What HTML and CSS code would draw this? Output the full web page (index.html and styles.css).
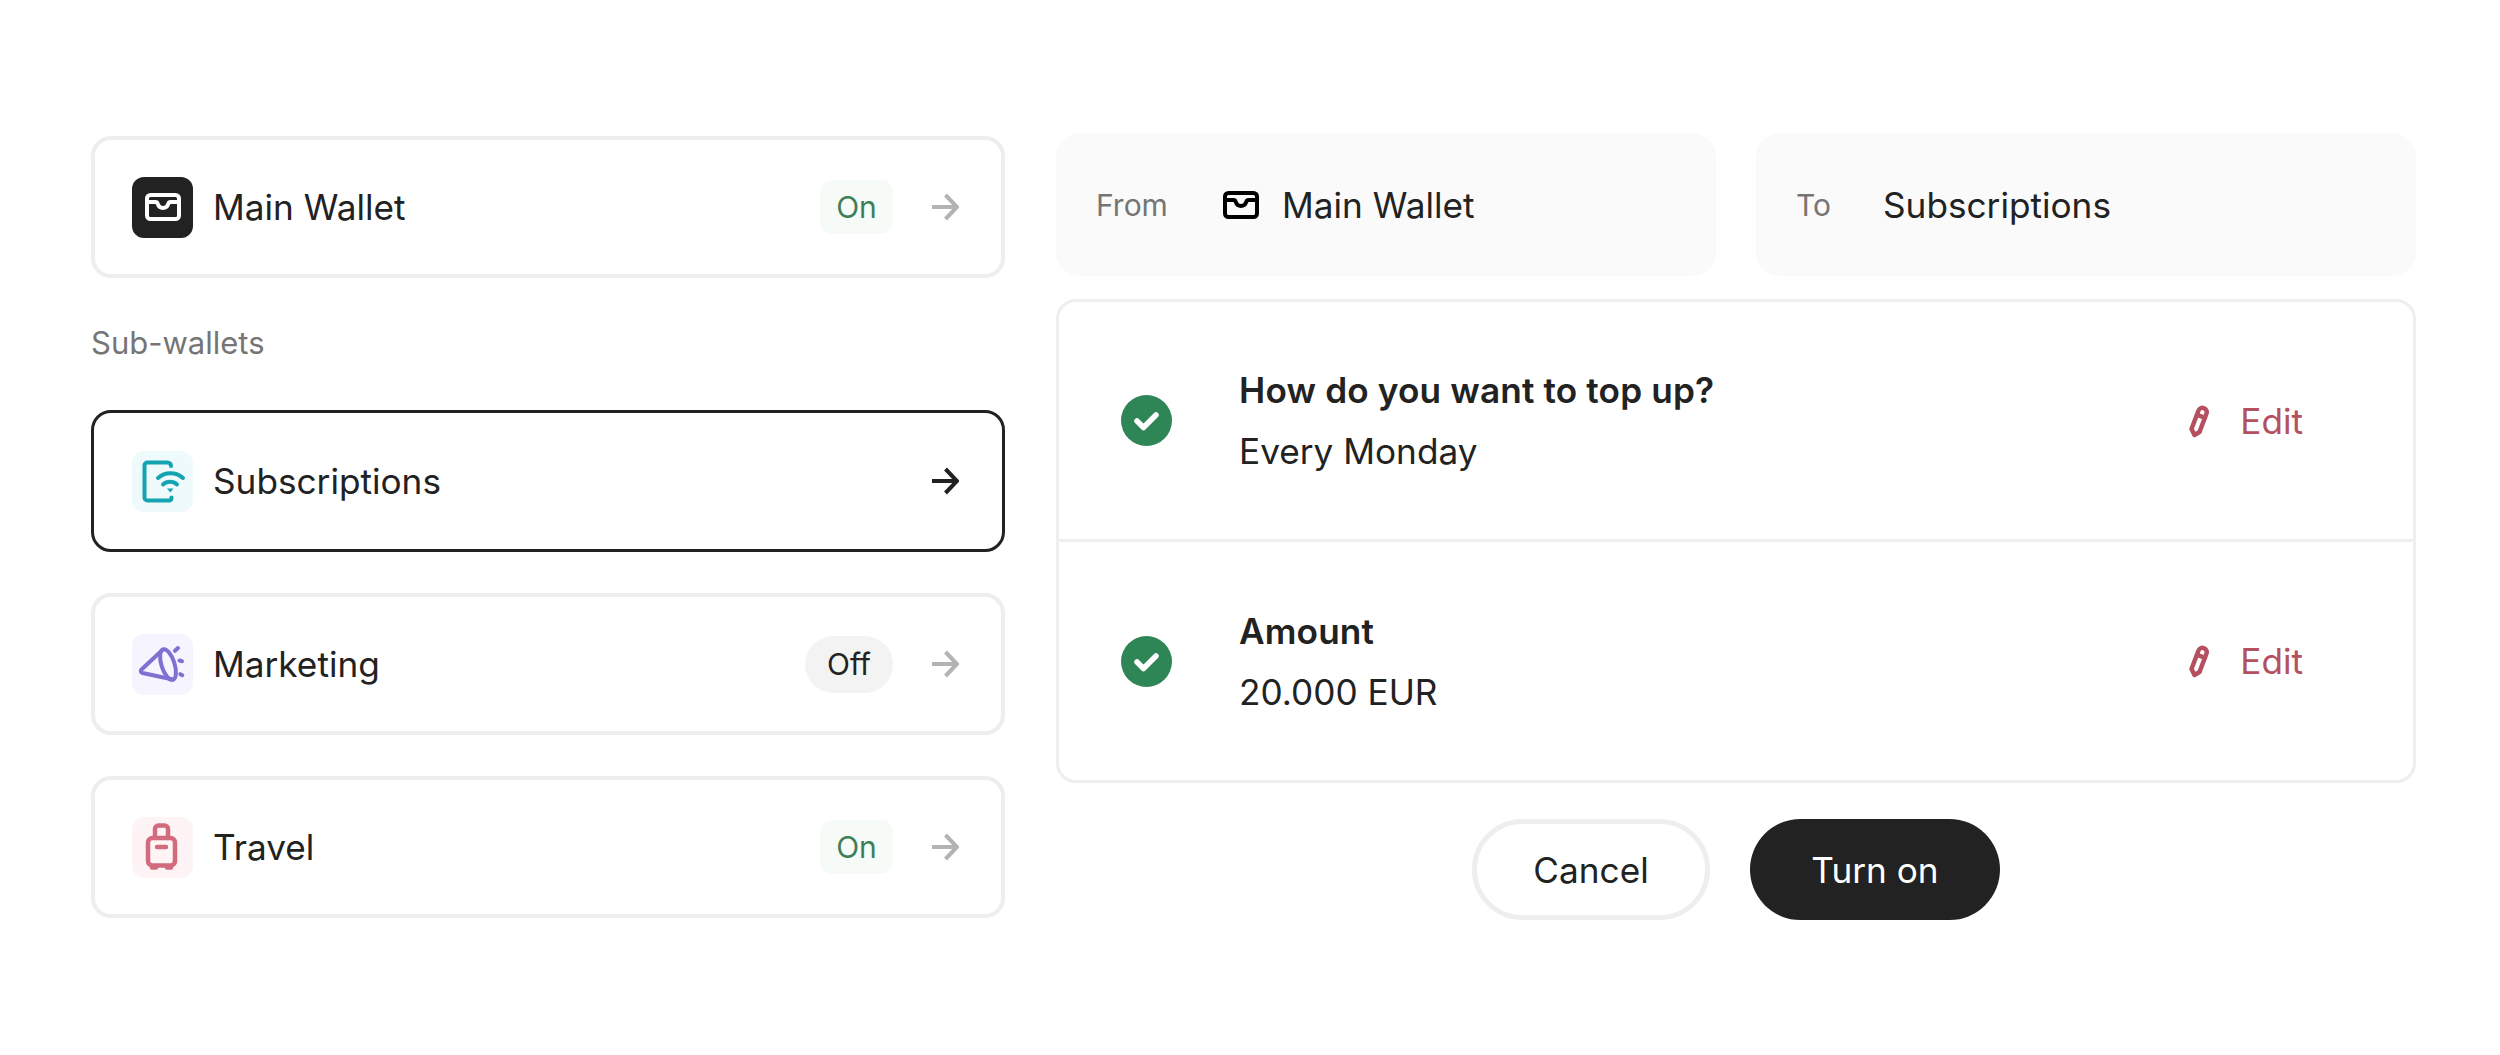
FILE: index.html
```html
<!DOCTYPE html>
<html lang="en">
<head>
<meta charset="utf-8">
<title>Wallets</title>
<link rel="stylesheet" href="styles.css">
</head>
<body>
<main class="page">
  <section class="wallets">
    <div class="card">
      <span class="tile tile-dark">
        <svg class="wallet-icon" viewBox="0 0 36 28"><rect x="2" y="2" width="32" height="24" rx="3.5"/><path d="M2 9h8.500c1.500 0 2 1 2.300 2 .7 2.500 2.700 4 5.200 4s4.500-1.500 5.200-4c.3-1 .8-2 2.300-2H34"/></svg>
      </span>
      <span class="name">Main Wallet</span>
      <span class="badge badge-on">On</span>
      <svg class="arrow" viewBox="0 0 28 28"><path d="M1 14h25M14.500 2 26 14 14.500 26"/></svg>
    </div>
    <h2 class="section-label">Sub-wallets</h2>
    <div class="card card-active">
      <span class="tile tile-teal">
        <svg class="tile-icon" viewBox="0 0 61 61"><path class="teal" d="M39 15c0-2-1.500-3.500-3.500-3.500h-20c-1.700 0-3 1.300-3 3V46.500c0 1.700 1.300 3 3 3H37c1.500 0 2.500-1 2.500-3"/><path class="teal" d="M26 27c7-6.500 18-6.500 25 0M31 33.500c4-3.700 10-3.700 14 0"/><path class="teal-fill" d="M35 37.500h6.500l-3.250 4z"/></svg>
      </span>
      <span class="name">Subscriptions</span>
      <svg class="arrow arrow-dark" viewBox="0 0 28 28"><path d="M1 14h25M14.500 2 26 14 14.500 26"/></svg>
    </div>
    <div class="card">
      <span class="tile tile-violet">
        <svg class="tile-icon" viewBox="0 0 61 61"><path class="violet" d="M31 15.500 9.500 35.500c-1.300 1.300-.8 3 1 3.500L41 45.500"/><ellipse class="violet" cx="36" cy="30.500" rx="6.500" ry="16" transform="rotate(-18 36 30.500)"/><path class="violet" d="M46 14l-3 2.800M47.500 26.500l2.500.7M48.300 40.200l2 1"/></svg>
      </span>
      <span class="name">Marketing</span>
      <span class="badge badge-off">Off</span>
      <svg class="arrow" viewBox="0 0 28 28"><path d="M1 14h25M14.500 2 26 14 14.500 26"/></svg>
    </div>
    <div class="card">
      <span class="tile tile-rose">
        <svg class="tile-icon tile-icon-bold" viewBox="0 0 61 61"><rect class="rose" x="16" y="21" width="27" height="27.500" rx="4.500"/><path class="rose" d="M23 21v-9c0-2 1.500-3.500 3.500-3.500h6c2 0 3.500 1.500 3.500 3.500v9M25 30h9M20 50.500h4M35 50.500h4"/></svg>
      </span>
      <span class="name">Travel</span>
      <span class="badge badge-on">On</span>
      <svg class="arrow" viewBox="0 0 28 28"><path d="M1 14h25M14.500 2 26 14 14.500 26"/></svg>
    </div>
  </section>

  <section class="details">
    <div class="route">
      <div class="route-box">
        <span class="route-label">From</span>
        <svg class="wallet-icon wallet-icon-dark" viewBox="0 0 36 28"><rect x="2" y="2" width="32" height="24" rx="3.5"/><path d="M2 9h8.500c1.500 0 2 1 2.300 2 .7 2.500 2.700 4 5.200 4s4.500-1.500 5.200-4c.3-1 .8-2 2.300-2H34"/></svg>
        <span class="name">Main Wallet</span>
      </div>
      <div class="route-box">
        <span class="route-label route-label-to">To</span>
        <span class="name">Subscriptions</span>
      </div>
    </div>
    <div class="steps">
      <div class="step">
        <svg class="check" viewBox="0 0 51 51"><circle cx="25.500" cy="25.500" r="25.500"/><path d="M16 26l6.500 6.500L35 20"/></svg>
        <div class="step-text">
          <strong class="step-title">How do you want to top up?</strong>
          <span class="step-value">Every Monday</span>
        </div>
        <span class="edit">
          <svg class="pencil" viewBox="0 0 23 34"><path d="M2.500 25 9.500 6.500c.9-2.200 3-3.200 5.200-2.400 2.400.9 3.600 3.100 2.800 5.300L10.500 28l-5 3z"/><path d="M8.500 11l7.500 2.800"/></svg>
          Edit
        </span>
      </div>
      <div class="step">
        <svg class="check" viewBox="0 0 51 51"><circle cx="25.500" cy="25.500" r="25.500"/><path d="M16 26l6.500 6.500L35 20"/></svg>
        <div class="step-text">
          <strong class="step-title">Amount</strong>
          <span class="step-value">20.000 EUR</span>
        </div>
        <span class="edit">
          <svg class="pencil" viewBox="0 0 23 34"><path d="M2.500 25 9.500 6.500c.9-2.200 3-3.200 5.200-2.400 2.400.9 3.600 3.100 2.800 5.300L10.500 28l-5 3z"/><path d="M8.500 11l7.500 2.800"/></svg>
          Edit
        </span>
      </div>
    </div>
    <div class="actions">
      <button class="btn btn-ghost">Cancel</button>
      <button class="btn btn-solid">Turn on</button>
    </div>
  </section>
</main>
</body>
</html>
```
FILE: styles.css
```css
* { box-sizing: border-box; }
html, body { margin: 0; background: #fff; }
body { font-family: Inter, "Liberation Sans", sans-serif; color: #222; }
.page {
  display: grid;
  grid-template-columns: 914px 1360px;
  column-gap: 51px;
  align-items: start;
  padding: 133px 0 0 91px;
}
.wallets { display: flex; flex-direction: column; padding-top: 3px; }
.card {
  display: flex;
  align-items: center;
  height: 142px;
  margin-bottom: 41px;
  padding: 0 42px 0 37px;
  border: 4px solid #eeeeee;
  border-radius: 20px;
}
.card:last-child { margin-bottom: 0; }
.card-active { border: 3px solid #222; padding: 0 43px 0 38px; }
.tile {
  flex: none;
  display: flex;
  align-items: center;
  justify-content: center;
  width: 61px;
  height: 61px;
  border-radius: 12px;
}
.tile-dark { background: #222; }
.tile-teal { background: #eefafb; }
.tile-violet { background: #f6f4ff; }
.tile-rose { background: #fef3f5; }
.tile-icon { display: block; width: 61px; height: 61px; fill: none; stroke-width: 4; stroke-linecap: round; stroke-linejoin: round; }
.tile-icon-bold { stroke-width: 4.5; }
.teal { stroke: #14a3b0; }
.teal-fill { fill: #14a3b0; stroke: none; }
.violet { stroke: #7f70d2; }
.rose { stroke: #d26b7e; }
.wallet-icon { display: block; width: 36px; height: 28px; fill: none; stroke: #fff; stroke-width: 4; stroke-linejoin: round; }
.wallet-icon-dark { stroke: #000; margin-right: 23px; flex: none; }
.name { font-size: 35.2px; line-height: 44px; color: #222; }
.card .name { margin-left: 20px; margin-right: auto; }
.badge {
  display: flex;
  align-items: center;
  justify-content: center;
  font-size: 30px;
  height: 54px;
  margin-right: 38px;
}
.badge-on { width: 73px; background: #f6fbf8; color: #3f7f57; border-radius: 12px; }
.badge-off { width: 88px; height: 57px; background: #f3f3f3; color: #222; border-radius: 29px; }
.arrow { flex: none; display: block; width: 28px; height: 28px; fill: none; stroke: #b3b3b3; stroke-width: 4; }
.arrow-dark { stroke: #222; }
.section-label {
  margin: 0;
  height: 132px;
  margin-top: -41px;
  padding-top: 47px;
  font-size: 31px;
  line-height: 36px;
  font-weight: 400;
  color: #757575;
}
.details { display: flex; flex-direction: column; }
.route { display: grid; grid-template-columns: 660px 660px; column-gap: 40px; }
.route-box {
  display: flex;
  align-items: center;
  height: 143px;
  padding-left: 40px;
  background: #fafafa;
  border-radius: 24px;
}
.route-label { width: 127px; font-size: 30px; color: #757575; flex: none; }
.route-label-to { width: 87px; }
.steps {
  margin-top: 23px;
  border: 3px solid #eeeeee;
  border-radius: 20px;
}
.step {
  display: flex;
  align-items: center;
  height: 237px;
  padding: 0 110px 0 62px;
}
.step + .step { border-top: 3px solid #eeeeee; height: 241px; }
.check { flex: none; width: 51px; height: 51px; }
.check circle { fill: #2e8555; }
.check path { fill: none; stroke: #fff; stroke-width: 5.5; stroke-linecap: round; stroke-linejoin: round; }
.step-text { display: flex; flex-direction: column; margin-left: 67px; margin-right: auto; gap: 17px; }
.step-title { font-size: 35.2px; line-height: 44px; font-weight: 600; letter-spacing: 0.15px; }
.step-value { font-size: 35.2px; line-height: 44px; }
.edit { display: flex; align-items: center; font-size: 35.2px; color: #b5505f; }
.pencil { width: 23px; height: 34px; margin-right: 28px; fill: none; stroke: #b5505f; stroke-width: 4.5; stroke-linejoin: round; stroke-linecap: round; }
.actions { display: flex; justify-content: center; gap: 40px; margin-top: 36px; }
.btn {
  font-family: inherit;
  font-size: 35.2px;
  height: 101px;
  border-radius: 51px;
  padding: 0;
}
.btn-ghost { width: 238px; background: #fff; border: 5px solid #eeeeee; color: #222; }
.btn-solid { width: 250px; background: #222; border: 0; color: #fff; }
```
